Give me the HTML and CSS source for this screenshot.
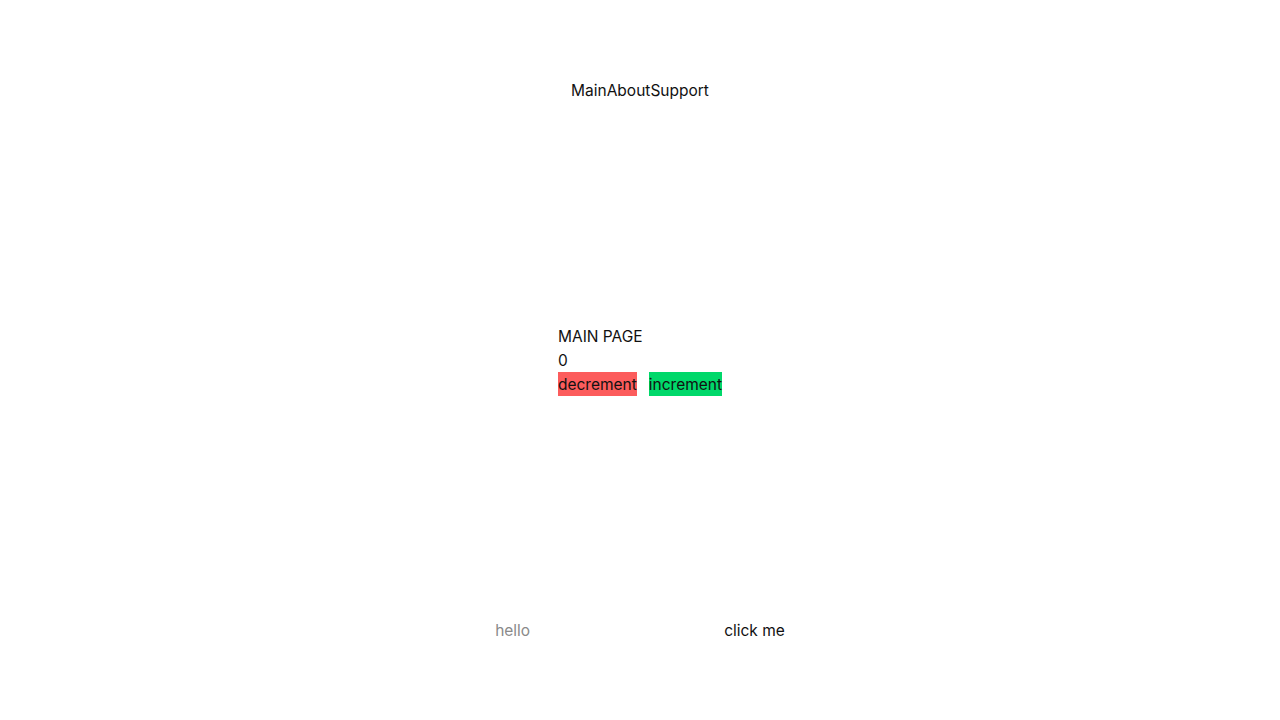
FILE: index.html
```html
<!DOCTYPE html>
<html>
<head>
<meta charset="utf-8">
<link rel="stylesheet" href="styles.css">
</head>
<body>
<div class="app">
  <header class="header">
    <nav class="nav">
      <a class="nav-link">Main</a><a class="nav-link">About</a><a class="nav-link">Support</a>
    </nav>
  </header>
  <main class="main">
    <div class="page">
      <div class="title">MAIN PAGE</div>
      <div class="count">0</div>
      <div class="actions">
        <button class="btn btn-dec">decrement</button>
        <button class="btn btn-inc">increment</button>
      </div>
    </div>
  </main>
  <footer class="footer">
    <div class="form">
      <input class="field" placeholder="hello">
      <button class="btn btn-plain">click me</button>
    </div>
  </footer>
</div>
</body>
</html>
```
FILE: styles.css
```css
* { box-sizing: border-box; }
html, body { margin: 0; padding: 0; }
body {
  font-family: Inter, "Noto Sans", sans-serif;
  font-size: 15.5px;
  line-height: 24px;
  color: #111;
  background: #fff;
}
.app {
  height: 720px;
  display: flex;
  flex-direction: column;
}
.header {
  height: 180px;
  padding-top: 2px;
  display: flex;
  align-items: center;
  justify-content: center;
}
.nav { display: flex; }
.nav-link { color: #111; text-decoration: none; }
.main {
  flex: 1;
  display: flex;
  align-items: center;
  justify-content: center;
}
.page { display: flex; flex-direction: column; }
.title, .count { padding-top: 1px; margin-bottom: -1px; }
.actions { display: flex; gap: 12px; }
.btn {
  font: inherit;
  line-height: 24px;
  border: none;
  padding: 1px 0 0;
  margin: 0;
  color: #111;
  background: transparent;
  height: 24px;
}
.btn-dec { background: #fc5c5c; }
.btn-inc { background: #00d86a; }
.btn-plain { padding: 0; }
.footer {
  height: 180px;
  padding-top: 2px;
  display: flex;
  align-items: center;
  justify-content: center;
}
.form { display: flex; align-items: center; }
.field {
  font: inherit;
  border: none;
  outline: none;
  padding: 0;
  margin: 0;
  width: 229px;
  height: 24px;
  color: #111;
  background: transparent;
}
.field::placeholder { color: #8a8a8a; }
```
